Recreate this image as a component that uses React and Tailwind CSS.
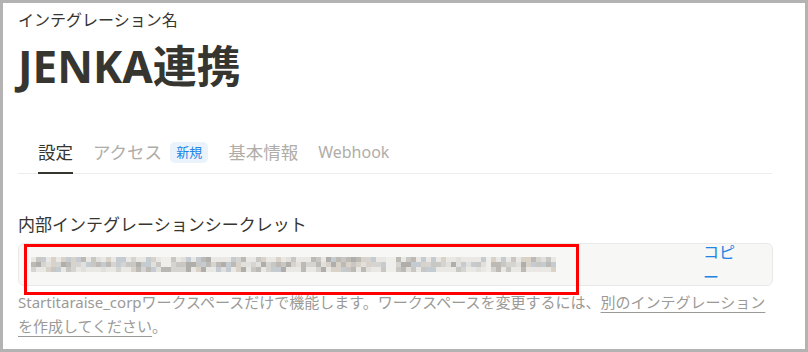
import React from "react";

const FONT = { fontFamily: '"Noto Sans", "Noto Sans CJK JP", sans-serif' };

// pseudo-random mosaic standing in for the blurred secret
function mosaicCells(cols, rows) {
  let seed = 7;
  const rand = () => {
    seed = (seed * 9301 + 49297) % 233280;
    return seed / 233280;
  };
  const tints = ["#c9c7c3", "#bdbab6", "#d6d4d0", "#c4cbd1", "#d9d2c8", "#b0aeab", "#e2e0dc"];
  const cells = [];
  for (let r = 0; r < rows; r++) {
    for (let c = 0; c < cols; c++) {
      const gap = c === 26 || c === 27 || c === 71 || c === 72 || c === 91;
      let color = tints[Math.floor(rand() * tints.length)];
      if (r !== 1 && rand() > 0.55) color = "#e9e8e5";
      if (gap) color = r === 2 && c < 28 ? "#b9b7b3" : "#efeeeb";
      cells.push(color);
    }
  }
  return cells;
}

const cells = mosaicCells(105, 3);

export default function App() {
  return (
    <div
      className="w-[808px] h-[352px] border-[3px] border-[#b3b3b3] bg-white text-[#37352f] overflow-hidden"
      style={FONT}
    >
      <div className="pl-[15px] pr-[33px] pt-[5px]">
        <div className="text-[16px] leading-[24px]">インテグレーション名</div>
        <h1 className="text-[44px] leading-[52px] font-bold mt-[8px]">JENKA連携</h1>

        <div className="mt-[45px] flex items-end gap-[20px] pl-[20px] border-b border-[#ededed] h-[37px]">
          <div className="text-[17.5px] leading-[24px] pb-[8px] border-b-2 border-[#37352f] -mb-px">設定</div>
          <div className="flex items-center pb-[9px] text-[17.5px] leading-[24px] text-[#b0ada8]">
            アクセス
            <span className="ml-[8px] rounded-[5px] bg-[#eaf3fc] text-[#2383e2] text-[13px] leading-[21px] px-[6px]">新規</span>
          </div>
          <div className="text-[17.5px] leading-[24px] pb-[9px] text-[#b0ada8]">基本情報</div>
          <div className="text-[16px] leading-[24px] pb-[9px] text-[#b0ada8]">Webhook</div>
        </div>

        <div className="mt-[39px] text-[17px] leading-[24px]">内部インテグレーションシークレット</div>

        <div className="relative mt-[6px] h-[43px] w-[755px] rounded-[6px] border border-[#e9e9e7] bg-[#f7f7f5] flex items-center">
          <div className="flex-1 pl-[12px]">
            <div className="grid grid-cols-[repeat(105,5px)] w-[525px]">
              {cells.map((c, i) => (
                <div key={i} className="h-[5px]" style={{ backgroundColor: c }} />
              ))}
            </div>
          </div>
          <div className="w-[34px] mr-[35px] text-[16px] leading-[25px] text-[#2383e2] break-all">コピー</div>
          <div className="absolute left-[5px] top-0 w-[555px] h-[51px] border-[3px] border-[#ff0000]" />
        </div>

        <p className="mt-[4px] text-[15px] leading-[24px] text-[#9b9a97] whitespace-nowrap">
          Startitaraise_corpワークスペースだけで機能します。ワークスペースを変更するには、
          <span className="underline underline-offset-[4px]">別のインテグレーション<br />を作成してください</span>。
        </p>
      </div>
    </div>
  );
}
